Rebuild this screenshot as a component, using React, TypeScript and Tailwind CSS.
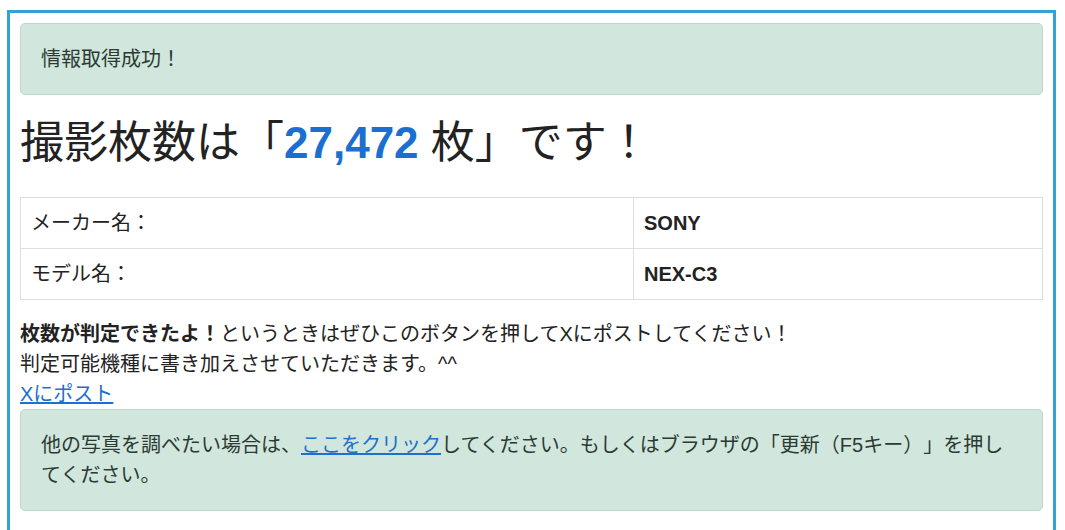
import React from "react";

export default function App() {
  return (
    <div className="min-h-[530px] bg-white pt-[10px] pl-[7px] font-['Liberation_Sans','Noto_Sans_CJK_JP',sans-serif] text-[20px] leading-[30px] text-[#222222] [text-spacing-trim:space-all]">
      <div className="w-[1049px] border-[3px] border-[#33a3d3] p-[10px]">
        <div className="rounded-[5px] border border-[#bcd9cb] bg-[#d1e6dc] px-[20px] py-[20px] text-[#2b3b34]">
          情報取得成功！
        </div>
        <h1 className="mt-[22px] mb-[27px] text-[44px] leading-[1.2] font-normal text-[#222222]">
          撮影枚数は「<span className="font-bold text-[#1a6fd0]">27,472</span> 枚」です！
        </h1>
        <table className="w-full border-collapse">
          <tbody>
            <tr>
              <td className="w-[613px] border border-[#dedede] px-[10px] py-[10px]">メーカー名：</td>
              <td className="border border-[#dedede] px-[10px] py-[10px] font-bold">SONY</td>
            </tr>
            <tr>
              <td className="w-[613px] border border-[#dedede] px-[10px] py-[10px]">モデル名：</td>
              <td className="border border-[#dedede] px-[10px] py-[10px] font-bold">NEX-C3</td>
            </tr>
          </tbody>
        </table>
        <p className="mt-[19px]">
          <b className="font-bold">枚数が判定できたよ！</b>というときはぜひこのボタンを押してXにポストしてください！
          <br />
          判定可能機種に書き加えさせていただきます。^^
          <br />
          <a href="#" className="text-[#1f6fce] underline">Xにポスト</a>
        </p>
        <div className="mb-[20px] rounded-[5px] border border-[#bcd9cb] bg-[#d1e6dc] px-[20px] py-[20px] text-[#2b3b34]">
          他の写真を調べたい場合は、<a href="#" className="text-[#1f6fce] underline">ここをクリック</a>してください。もしくはブラウザの「更新（F5キー）」を押してください。
        </div>
      </div>
    </div>
  );
}
